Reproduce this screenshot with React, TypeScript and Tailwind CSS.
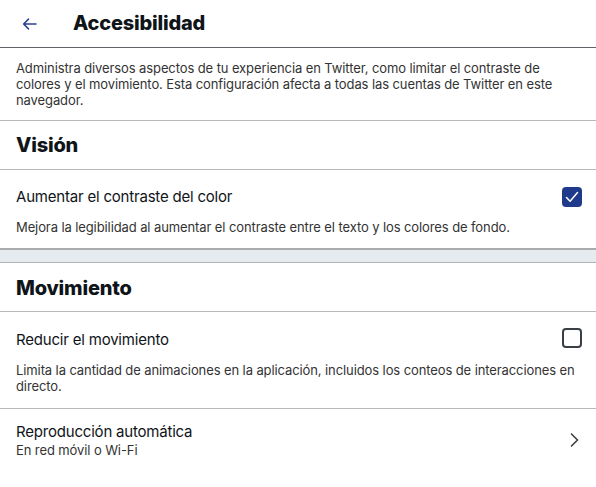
import React, { useState } from 'react';

const font = { fontFamily: 'Inter, "Noto Sans", sans-serif' };

function Checkbox({ checked, onClick }: { checked: boolean; onClick: () => void }) {
  if (checked) {
    return (
      <button onClick={onClick} className="w-5 h-5 rounded-[4px] bg-[#1f3a8a] flex items-center justify-center">
        <svg viewBox="0 0 20 20" className="w-5 h-5" fill="none" stroke="white" strokeWidth="1.5" strokeLinecap="round" strokeLinejoin="round">
          <path d="M4.5 10.5l3.6 3.8L15.5 5.5" />
        </svg>
      </button>
    );
  }
  return <button onClick={onClick} className="w-5 h-5 rounded-[4px] border-2 border-[#3a3f45] bg-white" />;
}

export default function App() {
  const [contrast, setContrast] = useState(true);
  const [motion, setMotion] = useState(false);

  return (
    <div className="w-[596px] h-[487px] bg-white text-[#0f1419] overflow-hidden" style={font}>
      {/* Header */}
      <div className="h-[48px] flex items-center border-b border-[#5f6368]">
        <button className="w-[36px] ml-[12px] flex items-center justify-center">
          <svg viewBox="0 0 24 24" className="w-[18px] h-[18px]" fill="none" stroke="#2b3f8c" strokeWidth="2" strokeLinecap="round" strokeLinejoin="round">
            <path d="M20 12H4M10 5.5L3.5 12l6.5 6.5" />
          </svg>
        </button>
        <h1 className="ml-[25px] text-[20px] font-extrabold tracking-[-0.2px] -mt-[2px]">Accesibilidad</h1>
      </div>

      {/* Description */}
      <p className="px-4 py-3 text-[13px] leading-4 text-[#333] tracking-[-0.1px] border-b border-[#b8b8b8]">
        Administra diversos aspectos de tu experiencia en Twitter, como limitar el contraste de colores y el movimiento. Esta configuración afecta a todas las cuentas de Twitter en este navegador.
      </p>

      {/* Vision */}
      <div className="h-[49px] px-4 flex items-center border-b border-[#b8b8b8]">
        <h2 className="text-[20px] font-extrabold tracking-[-0.2px]">Visión</h2>
      </div>
      <div className="px-4 pt-[17px] pb-[13px]">
        <div className="h-5 flex items-center justify-between">
          <span className="text-[15px] tracking-[-0.2px]">Aumentar el contraste del color</span>
          <div className="mr-[-2px]">
            <Checkbox checked={contrast} onClick={() => setContrast(!contrast)} />
          </div>
        </div>
        <p className="mt-3 text-[13px] leading-4 text-[#333] tracking-[-0.1px]">
          Mejora la legibilidad al aumentar el contraste entre el texto y los colores de fondo.
        </p>
      </div>

      {/* Divider band */}
      <div className="h-[15px] bg-[#e6ebef] border-t-2 border-b border-t-[#a9abad] border-b-[#b0b3b6]" />

      {/* Movement */}
      <div className="h-[49px] px-4 pt-[2px] flex items-center border-b border-[#b8b8b8]">
        <h2 className="text-[20px] font-extrabold tracking-[-0.2px]">Movimiento</h2>
      </div>
      <div className="px-4 pt-[18px] pb-[14px] border-b border-[#b8b8b8]">
        <div className="h-5 flex items-center justify-between">
          <span className="text-[15px] tracking-[-0.2px]">Reducir el movimiento</span>
          <div className="mr-[-2px]">
            <Checkbox checked={motion} onClick={() => setMotion(!motion)} />
          </div>
        </div>
        <p className="mt-3 text-[13px] leading-4 text-[#333] tracking-[-0.1px]">
          Limita la cantidad de animaciones en la aplicación, incluidos los conteos de interacciones en directo.
        </p>
      </div>

      <div className="px-4 pt-[13px] flex items-center justify-between">
        <div>
          <div className="text-[15px] leading-5 tracking-[-0.2px]">Reproducción automática</div>
          <div className="text-[13px] leading-4 text-[#333] tracking-[-0.1px]">En red móvil o Wi-Fi</div>
        </div>
        <svg viewBox="0 0 12 16" className="w-[12px] h-[16px]" fill="none" stroke="#3a3f45" strokeWidth="1.6" strokeLinecap="round" strokeLinejoin="round">
          <path d="M3.5 2l6 6-6 6" />
        </svg>
      </div>
    </div>
  );
}
